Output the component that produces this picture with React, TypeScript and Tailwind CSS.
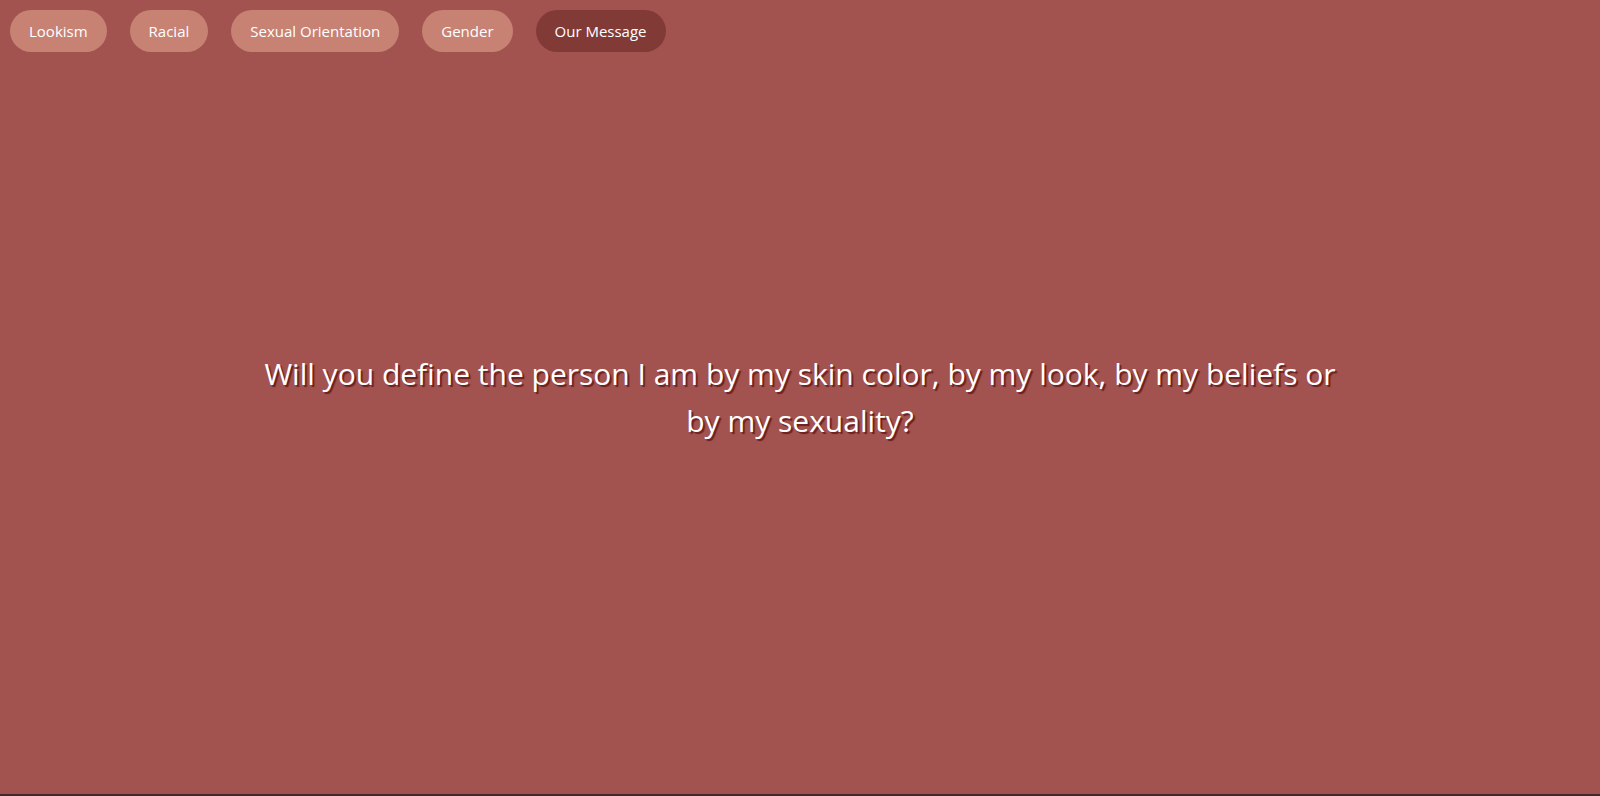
import React from 'react';

const tabs = ['Lookism', 'Racial', 'Sexual Orientation', 'Gender', 'Our Message'];

const NavButton: React.FC<{ label: string; active?: boolean }> = ({ label, active }) => (
  <button
    className={
      active
        ? 'h-[42px] px-[19px] rounded-full bg-[#823a37] text-white text-[15px] leading-none'
        : 'h-[42px] px-[19px] rounded-full bg-[#c78274] text-white text-[15px] leading-none'
    }
  >
    {label}
  </button>
);

const App: React.FC = () => {
  return (
    <div
      className="h-screen w-full flex flex-col bg-[#a25350] overflow-hidden"
      style={{ fontFamily: '"Open Sans", "Noto Sans", sans-serif' }}
    >
      <nav className="flex items-center gap-[23px] pl-[10px] pt-[10px]">
        {tabs.map((t) => (
          <NavButton key={t} label={t} active={t === 'Our Message'} />
        ))}
      </nav>
      <main className="flex-1 flex items-center justify-center pb-[52px]">
        <p className="max-w-[1100px] text-center text-white text-[30px] leading-[47px] [text-shadow:2px_2px_1px_#6b1f1f]">
          Will you define the person I am by my skin color, by my look, by my beliefs or by my sexuality?
        </p>
      </main>
      <div className="h-[2px] bg-[#3d2b2c]" />
    </div>
  );
};

export default App;
